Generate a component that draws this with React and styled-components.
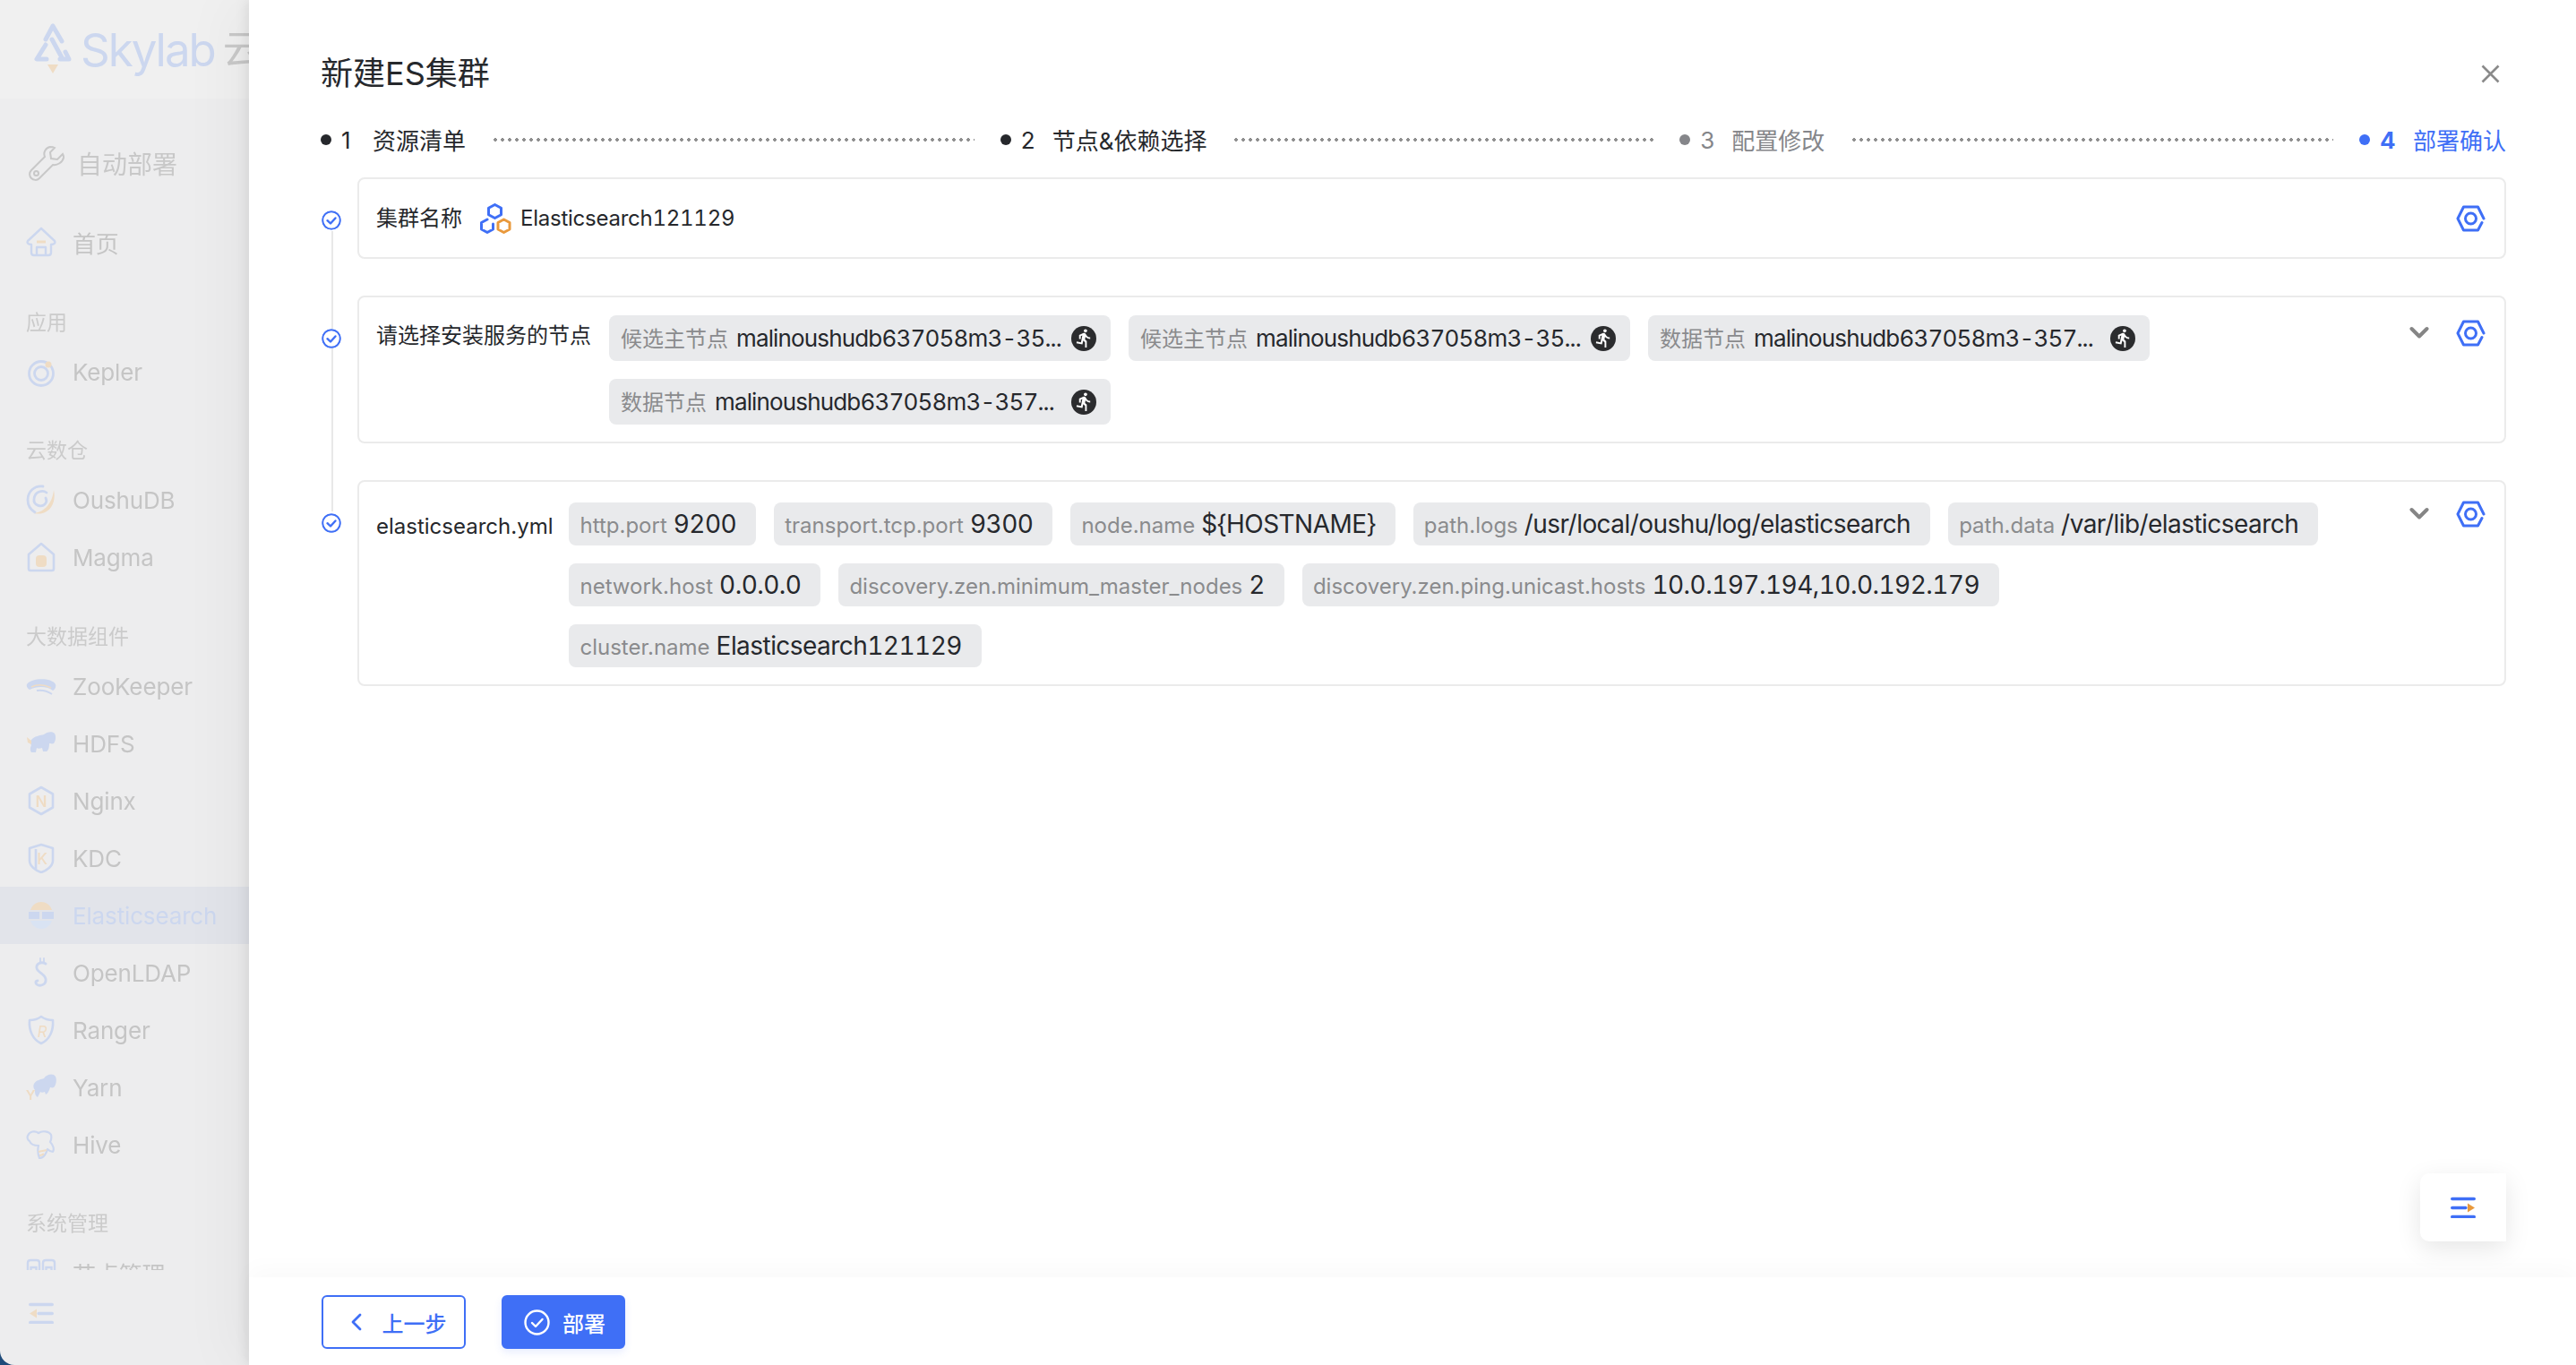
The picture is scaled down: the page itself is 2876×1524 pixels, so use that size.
import React from 'react';
import styled, { createGlobalStyle } from 'styled-components';
import { MdDirectionsRun } from 'react-icons/md';

const BLUE = '#3f6ff6';
const DIM_BLUE = '#ccd7ef';
const DIM_ORANGE = '#efdcc4';

const GlobalStyle = createGlobalStyle`
  html, body { margin: 0; padding: 0; background: #1f4b7a; }
  body { font-family: Inter, "Noto Sans CJK SC", sans-serif; }
  * { box-sizing: border-box; }
`;

const Page = styled.div`
  width: 2876px;
  height: 1524px;
  display: flex;
  overflow: hidden;
`;

const Sidebar = styled.aside`
  width: 278px;
  flex: none;
  height: 100%;
  display: flex;
  flex-direction: column;
  background: #ededee;
  border-bottom-left-radius: 16px;
  overflow: hidden;
`;

const Brand = styled.div`
  height: 110px;
  flex: none;
  display: flex;
  align-items: center;
  padding-left: 37px;
  gap: 9px;
  background: #f0f0f0;
  white-space: nowrap;
  filter: blur(0.6px);

  & > * {
    flex: none;
  }
`;

const BrandName = styled.span`
  font-size: 51px;
  letter-spacing: -2px;
  color: ${DIM_BLUE};
  line-height: 1;
`;

const BrandSuffix = styled.span`
  font-size: 44px;
  color: #c9c9c9;
  line-height: 1;
`;

const NavScroll = styled.nav`
  flex: 1;
  min-height: 0;
  overflow: hidden;
  padding-top: 40px;
  filter: blur(0.5px);
`;

const SectionHead = styled.div`
  height: 64px;
  display: flex;
  align-items: center;
  padding-left: 32px;
  gap: 14px;
  font-size: 28px;
  color: #c8c8c8;
  margin-bottom: 24px;
`;

const NavItem = styled.div`
  height: 64px;
  display: flex;
  align-items: center;
  padding-left: 29px;
  gap: 18px;
  font-size: 26px;
  letter-spacing: -0.15px;
  color: ${p => (p.$active ? DIM_BLUE : '#c5c5c5')};
  background: ${p => (p.$active ? '#e2e4ea' : 'transparent')};
`;

const NavIcon = styled.svg`
  width: 34px;
  height: 34px;
  flex: none;
`;

const GroupTitle = styled.div`
  height: 40px;
  line-height: 40px;
  padding-left: 29px;
  font-size: 23px;
  color: #cbcbcb;
  margin: ${p => (p.$top || 36)}px 0 3px;
`;

const SideFooter = styled.div`
  height: 106px;
  flex: none;
  display: flex;
  align-items: flex-start;
  padding: 36px 0 0 32px;
  filter: blur(0.4px);
`;

const Modal = styled.main`
  flex: 1;
  min-width: 0;
  position: relative;
  display: flex;
  flex-direction: column;
  background: #fff;
  box-shadow: -4px 0 12px rgba(0, 0, 0, 0.07), -20px 0 60px rgba(0, 0, 0, 0.04);
`;

const Body = styled.div`
  flex: 1;
  min-height: 0;
  padding: 57px 78px 0 80px;
`;

const Head = styled.header`
  display: flex;
  align-items: center;
  justify-content: space-between;
  height: 50px;
  padding-right: 7px;
`;

const Title = styled.h1`
  margin: 0;
  font-size: 36px;
  font-weight: 400;
  color: #26282c;
  line-height: 50px;
`;

const CloseIcon = styled.svg`
  width: 21px;
  height: 21px;
`;

const Steps = styled.ol`
  list-style: none;
  display: flex;
  align-items: center;
  margin: 29px 0 22px;
  padding: 0;
  height: 40px;
`;

const Step = styled.li`
  display: flex;
  align-items: center;
  flex: ${p => (p.$last ? 'none' : '1 1 0')};
  min-width: 0;
  font-size: 26px;
  color: ${p => p.$color};
`;

const StepDot = styled.span`
  width: 12px;
  height: 12px;
  border-radius: 50%;
  background: ${p => p.$color};
  flex: none;
`;

const StepNum = styled.span`
  width: ${p => (p.$bold ? 17 : 15)}px;
  margin: 0 20px 0 11px;
  font-weight: ${p => (p.$bold ? 700 : 400)};
`;

const StepText = styled.span`
  padding-bottom: 2px;
`;

const StepLine = styled.span`
  flex: 1;
  height: 4px;
  margin: 0 29px 0 31px;
  background-image: radial-gradient(circle at 2px 2px, #8f8f8f 1.9px, transparent 2.1px);
  background-size: 8px 4px;
`;

const Row = styled.section`
  display: flex;
  padding-bottom: ${p => (p.$last ? 0 : 41)}px;
`;

const Rail = styled.div`
  width: 41px;
  flex: none;
  position: relative;
  padding: 37px 0 0 1px;

  &::before {
    content: '';
    position: absolute;
    left: 12px;
    width: 2px;
    background: #e8e8e8;
    top: ${p => (p.$first ? 60 : 0)}px;
    bottom: ${p => (p.$last ? 'auto' : '-41px')};
    height: ${p => (p.$last ? '35px' : 'auto')};
  }
`;

const CheckIcon = styled.svg`
  position: relative;
  display: block;
  width: 22px;
  height: 22px;
  background: #fff;
  border-radius: 50%;
`;

const Card = styled.div`
  flex: 1;
  min-width: 0;
  display: flex;
  align-items: ${p => (p.$center ? 'center' : 'flex-start')};
  min-height: ${p => p.$min || 0}px;
  padding: ${p => p.$pad};
  border: 2px solid #ebebeb;
  border-radius: 8px;
`;

const Label = styled.div`
  flex: none;
  font-size: 24px;
  color: #26282c;
  line-height: ${p => p.$line}px;
  margin-right: ${p => p.$gap || 20}px;
  white-space: nowrap;
`;

const ClusterValue = styled.div`
  flex: 1;
  display: flex;
  align-items: center;
  gap: 10px;
  font-size: 24px;
  letter-spacing: -0.25px;
  font-variant-numeric: tabular-nums;
  color: #26282c;
`;

const Tags = styled.div`
  flex: 1;
  min-width: 0;
  display: flex;
  flex-wrap: wrap;
  gap: 20px;
`;

const Tag = styled.div`
  display: inline-flex;
  align-items: baseline;
  gap: 7px;
  height: ${p => p.$h}px;
  line-height: ${p => p.$h}px;
  padding: 0 22px 0 12px;
  background: #e9eaec;
  border-radius: 8px;
  white-space: nowrap;
`;

const NodeTag = styled(Tag)`
  width: 560px;
  gap: 9px;
  padding: 0 16px 0 13px;
`;

const TagKey = styled.span`
  font-size: 24px;
  color: #8a8b8d;
`;

const TagValue = styled.span`
  font-size: ${p => p.$size}px;
  letter-spacing: ${p => p.$track}px;
  font-variant-numeric: tabular-nums;
  color: #26282c;
`;

const RunBadge = styled.span`
  width: 28px;
  height: 28px;
  margin-left: auto;
  align-self: center;
  display: flex;
  align-items: center;
  justify-content: center;
  border-radius: 50%;
  background: #2b2c2e;
  color: #fff;
  font-size: 23px;
  flex: none;
`;

const Actions = styled.div`
  flex: none;
  display: flex;
  align-items: center;
  gap: 30px;
  margin-top: ${p => p.$top || 0}px;
`;

const Chevron = styled.svg`
  width: 22px;
  height: 14px;
  margin-top: -3px;
`;

const GearIcon = styled.svg`
  width: 33px;
  height: 30px;
  flex: none;
`;

const FloatTool = styled.div`
  position: absolute;
  right: 78px;
  top: 1310px;
  width: 96px;
  height: 76px;
  display: flex;
  align-items: center;
  justify-content: center;
  background: #fff;
  border-radius: 10px 0 0 10px;
  box-shadow: 0 8px 28px rgba(0, 0, 0, 0.1);
`;

const Footer = styled.footer`
  height: 98px;
  flex: none;
  display: flex;
  gap: 40px;
  padding: 20px 0 0 81px;
  background: #fff;
  box-shadow: 0 -10px 24px rgba(0, 0, 0, 0.025);
  position: relative;
`;

const Button = styled.button`
  height: 60px;
  width: ${p => p.$w}px;
  display: flex;
  align-items: center;
  justify-content: center;
  gap: ${p => p.$gap}px;
  padding: 0 0 0 ${p => p.$left}px;
  font: 500 24px Inter, "Noto Sans CJK SC", sans-serif;
  border-radius: 6px;
  border: 2px solid ${BLUE};
  color: ${p => (p.$primary ? '#fff' : BLUE)};
  background: ${p => (p.$primary ? BLUE : '#fff')};
  box-shadow: ${p => (p.$primary ? '0 4px 8px rgba(63, 111, 246, 0.12)' : 'none')};
`;

const I = {
  Wrench: () => (
    <svg width="40" height="40" viewBox="0 0 40 40" fill="none" stroke="#c8c8c8" strokeWidth="2">
      <path d="M24 2c-5 1-8 6-6 11L3 28c-3 3-2 7 0 9s6 3 9 0l15-15c5 1 11-3 12-8 .2-1.500-.5-3-1-4l-6 6-7-1-1-7 5-5c-1-.6-3-1-5-1z" />
      <circle cx="8.500" cy="31.500" r="2.500" />
    </svg>
  ),
  Home: () => (
    <NavIcon viewBox="0 0 34 34" fill="none" stroke={DIM_BLUE} strokeWidth="2.400" strokeLinejoin="round">
      <path d="M17 2 2 16c-1 2 0 4 4 4v9c0 2 1 3 3 3h16c2 0 3-1 3-3v-9c4 0 5-2 4-4z" />
      <path d="M12 32v-9h10v9" />
      <path d="M12 17h10" stroke={DIM_ORANGE} strokeWidth="3" />
    </NavIcon>
  ),
  Kepler: () => (
    <NavIcon viewBox="0 0 34 34" fill="none" stroke={DIM_BLUE} strokeWidth="2.800">
      <circle cx="17" cy="19" r="13.500" />
      <circle cx="17" cy="19" r="7.500" />
      <circle cx="25" cy="9" r="3.500" fill={DIM_ORANGE} stroke="none" />
    </NavIcon>
  ),
  Oushu: () => (
    <NavIcon viewBox="0 0 34 34" fill="none" stroke={DIM_BLUE} strokeWidth="2.800" strokeLinecap="round">
      <path d="M19 2C9 1 2 8 2 17c0 6 3 11 8 14" />
      <path d="M23 9c-4-3-13-2-14 7-1 7 8 10 12 6 2-2 2-5 1-7" />
      <path d="M31 6c2 9 0 19-8 24-5 3-9 3-14 2 9-1 20-8 22-26z" fill={DIM_ORANGE} stroke="none" />
    </NavIcon>
  ),
  Magma: () => (
    <NavIcon viewBox="0 0 34 34" fill="none" stroke={DIM_BLUE} strokeWidth="2.600" strokeLinejoin="round">
      <path d="M17 2 3 14v3h0v13c0 1.500 1 2 2 2h24c1 0 2-.5 2-2V17 14z" />
      <rect x="11" y="15" width="12" height="13" rx="4" fill={DIM_ORANGE} stroke="none" />
    </NavIcon>
  ),
  Zoo: () => (
    <NavIcon viewBox="0 0 34 34">
      <path d="M1 15C6 8 28 7 33 15c1 3-1 6-3 7-6-5-18-5-26-1-2-1-4-4-3-6z" fill={DIM_BLUE} />
      <path d="M6 18c6-3 14-3 22 1" stroke={DIM_ORANGE} strokeWidth="1.500" fill="none" />
      <path d="M12 22c6-1 11 0 17 4" stroke={DIM_BLUE} strokeWidth="2" fill="none" />
    </NavIcon>
  ),
  Elephant: () => (
    <NavIcon viewBox="0 0 34 34">
      <path d="M6 13c3-4 10-5 14-6 3-3 10-4 12-1 2 3 1 9-1 11-2 1-4 0-5 0 0 4-1 8-3 9h-4l-1-4c-3 1-5 1-6 0l-1 5H6c-2-3-1-6 0-8-2-2-2-4 0-6z" fill={DIM_BLUE} />
      <path d="M6 14 1 10l1 6 4 2" fill={DIM_ORANGE} />
    </NavIcon>
  ),
  Nginx: () => (
    <NavIcon viewBox="0 0 34 34" fill="none" stroke={DIM_BLUE} strokeWidth="2.600" strokeLinejoin="round">
      <path d="M17 2 30 9.500v15L17 32 4 24.500v-15z" />
      <text x="17" y="23.500" textAnchor="middle" fontSize="17" fontWeight="600" fill={DIM_ORANGE} stroke="none">N</text>
    </NavIcon>
  ),
  Kdc: () => (
    <NavIcon viewBox="0 0 34 34" fill="none" stroke={DIM_BLUE} strokeWidth="2.600" strokeLinejoin="round">
      <path d="M17 2 30 6v14c0 6-7 11-13 13C11 31 4 26 4 20V6z" />
      <path d="M11 7v22" />
      <text x="18" y="24" textAnchor="middle" fontSize="17" fontWeight="500" fill={DIM_ORANGE} stroke="none">K</text>
    </NavIcon>
  ),
  Elastic: () => (
    <NavIcon viewBox="0 0 34 34">
      <path d="M5 11C7 5 12 2 17 2s10 3 12 9z" fill={DIM_ORANGE} />
      <path d="M3 13h12v8H3z" fill={DIM_BLUE} />
      <path d="M18 13h13v8H18z" fill={DIM_BLUE} />
      <path d="M5 23h24c-2 6-7 9-12 9s-10-3-12-9z" fill="#d9e3f3" />
    </NavIcon>
  ),
  Ldap: () => (
    <NavIcon viewBox="0 0 34 34" fill="none" stroke={DIM_BLUE} strokeWidth="2.800" strokeLinecap="round">
      <path d="M22 7c-5-3-11 0-10 5s9 6 10 12-6 9-10 6c-2-2-1-4 1-4" />
      <path d="M16 1v5M20 1v5" strokeWidth="1.800" />
    </NavIcon>
  ),
  Ranger: () => (
    <NavIcon viewBox="0 0 34 34" fill="none" stroke={DIM_BLUE} strokeWidth="2.600" strokeLinejoin="round">
      <path d="M17 2c4 3 9 4 13 4 1 12-4 22-13 26C8 28 3 18 4 6c4 0 9-1 13-4z" />
      <text x="18" y="25" textAnchor="middle" fontSize="17" fontStyle="italic" fill={DIM_ORANGE} stroke="none">R</text>
    </NavIcon>
  ),
  Yarn: () => (
    <NavIcon viewBox="0 0 34 34">
      <path d="M9 13c2-4 8-5 11-6 3-5 11-6 13-2 2 4 0 11-2 12-2 1-3 0-4 0-1 4-3 7-5 8l-1-3c-2 1-4 1-5 0l-3 6c-3-2-3-5-3-8-2-2-2-5-1-7z" fill={DIM_BLUE} />
      <text x="5" y="31" textAnchor="middle" fontSize="15" fontWeight="600" fill={DIM_ORANGE}>Y</text>
    </NavIcon>
  ),
  Hive: () => (
    <NavIcon viewBox="0 0 34 34" fill="none" stroke={DIM_BLUE} strokeWidth="2.200" strokeLinejoin="round">
      <path d="M2 7c2-5 8-6 12-3 4-3 12-2 14 2 1 4 0 6-1 8 3 3 5 8 3 11-3 0-4-1-6-3-1 4-4 10-9 10-2-5-2-10-1-14-5 0-9-2-10-5-2-1-3-4-2-6z" />
      <path d="M14 25c3-1 6-1 9-2M15 29c2 0 4-1 5-2" stroke={DIM_ORANGE} />
    </NavIcon>
  ),
  Nodes: () => (
    <NavIcon viewBox="0 0 34 34" fill="none" stroke={DIM_BLUE} strokeWidth="2.400">
      <path d="M2 31V6c0-2 1-3 3-3h7c2 0 3 1 3 3v25zM19 31V6c0-2 1-3 3-3h7c2 0 3 1 3 3v25z" />
      <path d="M5.500 11h6v5h-6zM22.500 11h6v5h-6z" />
    </NavIcon>
  ),
};

const CheckMark = () => (
  <CheckIcon viewBox="0 0 22 22" fill="none" stroke={BLUE}>
    <circle cx="11" cy="11" r="9.800" strokeWidth="2" />
    <path d="M6.500 11.200 10 14.500l5.500-6" strokeWidth="2.400" strokeLinecap="round" strokeLinejoin="round" />
  </CheckIcon>
);

const Gear = () => (
  <GearIcon viewBox="0 0 33 30" fill="none" stroke={BLUE} strokeWidth="3" strokeLinecap="round" strokeLinejoin="round">
    <path d="M31 15 24.500 2h-16L2 15l6.500 13h16l4.500-8.500" />
    <circle cx="16.500" cy="15" r="6" />
  </GearIcon>
);

const Down = () => (
  <Chevron viewBox="0 0 22 14" fill="none" stroke="#858585" strokeWidth="4" strokeLinecap="round" strokeLinejoin="round">
    <path d="M2.500 3l8.500 8.500L19.500 3" />
  </Chevron>
);

const HexCluster = () => (
  <svg width="35" height="34" viewBox="0 0 35 34" fill="none" strokeWidth="3" strokeLinejoin="round">
    <path d="M16.500 1.500l7 3.800v7.400l-7 3.800-7-3.800V5.300z" stroke={BLUE} />
    <path d="M14.500 23v6l-6.500 3.500L1.500 29v-7.500L8 18" stroke={BLUE} strokeLinecap="round" />
    <path d="M26.500 18l6.500 3.500V29l-6.500 3.500L20 29v-7.500z" stroke="#e9993c" />
  </svg>
);

const ListGlyph = ({ line, arrow, flip }) => (
  <svg width="28" height="24" viewBox="0 0 28 24" fill="none" stroke={line} strokeWidth="3.600" strokeLinecap="round">
    <g transform={flip ? 'translate(28,0) scale(-1,1)' : undefined}>
      <path d="M1.800 2.500h24.400M1.800 12.500h15M1.800 22.500h24.400" />
      <path d="M19 7.500v10l8-5z" fill={arrow} stroke="none" />
    </g>
  </svg>
);

const STEPS = [
  { num: '1', text: '资源清单', color: '#26282c' },
  { num: '2', text: '节点&依赖选择', color: '#26282c' },
  { num: '3', text: '配置修改', color: '#85868a' },
  { num: '4', text: '部署确认', color: BLUE, bold: true, last: true },
];

const NODES = [
  { role: '候选主节点', host: 'malinoushudb637058m3-35...' },
  { role: '候选主节点', host: 'malinoushudb637058m3-35...' },
  { role: '数据节点', host: 'malinoushudb637058m3-357...' },
  { role: '数据节点', host: 'malinoushudb637058m3-357...' },
];

const YML = [
  ['http.port', '9200'],
  ['transport.tcp.port', '9300'],
  ['node.name', '${HOSTNAME}'],
  ['path.logs', '/usr/local/oushu/log/elasticsearch'],
  ['path.data', '/var/lib/elasticsearch'],
  ['network.host', '0.0.0.0'],
  ['discovery.zen.minimum_master_nodes', '2'],
  ['discovery.zen.ping.unicast.hosts', '10.0.197.194,10.0.192.179'],
  ['cluster.name', 'Elasticsearch121129'],
];

const COMPONENTS = [
  ['ZooKeeper', I.Zoo],
  ['HDFS', I.Elephant],
  ['Nginx', I.Nginx],
  ['KDC', I.Kdc],
  ['Elasticsearch', I.Elastic, true],
  ['OpenLDAP', I.Ldap],
  ['Ranger', I.Ranger],
  ['Yarn', I.Yarn],
  ['Hive', I.Hive],
];

function Side() {
  return (
    <Sidebar>
      <Brand>
        <svg width="44" height="58" viewBox="0 0 44 58" fill="none">
          <path d="M22 3 32 20 M22 3 14 18 M21 18 33 40 M14 24 4 40h11 M30 40h10l-4-8" stroke={DIM_BLUE} strokeWidth="5" strokeLinecap="round" strokeLinejoin="round" />
          <path d="M16 46h12l-6 10z" fill={DIM_ORANGE} />
        </svg>
        <BrandName>Skylab</BrandName>
        <BrandSuffix>云</BrandSuffix>
      </Brand>
      <NavScroll>
        <SectionHead><I.Wrench />自动部署</SectionHead>
        <NavItem><I.Home />首页</NavItem>
        <GroupTitle $top={38}>应用</GroupTitle>
        <NavItem><I.Kepler />Kepler</NavItem>
        <GroupTitle>云数仓</GroupTitle>
        <NavItem><I.Oushu />OushuDB</NavItem>
        <NavItem><I.Magma />Magma</NavItem>
        <GroupTitle $top={37}>大数据组件</GroupTitle>
        {COMPONENTS.map(([name, Icon, active]) => (
          <NavItem key={name} $active={active}><Icon />{name}</NavItem>
        ))}
        <GroupTitle>系统管理</GroupTitle>
        <NavItem><I.Nodes />节点管理</NavItem>
      </NavScroll>
      <SideFooter>
        <ListGlyph line={DIM_BLUE} arrow={DIM_ORANGE} flip />
      </SideFooter>
    </Sidebar>
  );
}

export default function App() {
  return (
    <Page>
      <GlobalStyle />
      <Side />
      <Modal>
        <Body>
          <Head>
            <Title>新建ES集群</Title>
            <CloseIcon viewBox="0 0 21 21" fill="none" stroke="#8a8a8a" strokeWidth="2.600">
              <path d="M1.500 1.500l18 18M19.500 1.500l-18 18" />
            </CloseIcon>
          </Head>
          <Steps>
            {STEPS.map(s => (
              <Step key={s.num} $color={s.color} $last={s.last}>
                <StepDot $color={s.color} />
                <StepNum $bold={s.bold}>{s.num}</StepNum>
                <StepText>{s.text}</StepText>
                {!s.last && <StepLine />}
              </Step>
            ))}
          </Steps>

          <Row>
            <Rail $first><CheckMark /></Rail>
            <Card $center $min={91} $pad="0 21px 0 19px">
              <Label $line={40}>集群名称</Label>
              <ClusterValue><HexCluster />Elasticsearch121129</ClusterValue>
              <Actions><Gear /></Actions>
            </Card>
          </Row>

          <Row>
            <Rail><CheckMark /></Rail>
            <Card $pad="20px 21px 19px 19px">
              <Label $line={46}>请选择安装服务的节点</Label>
              <Tags>
                {NODES.map((n, i) => (
                  <NodeTag key={i} $h={51}>
                    <TagKey>{n.role}</TagKey>
                    <TagValue $size={26} $track={-0.85}>{n.host}</TagValue>
                    <RunBadge><MdDirectionsRun /></RunBadge>
                  </NodeTag>
                ))}
              </Tags>
              <Actions $top={5}><Down /><Gear /></Actions>
            </Card>
          </Row>

          <Row $last>
            <Rail $last><CheckMark /></Rail>
            <Card $pad="23px 21px 19px 19px">
              <Label $line={54} $gap={18}>elasticsearch.yml</Label>
              <Tags>
                {YML.map(([k, v]) => (
                  <Tag key={k} $h={48}>
                    <TagKey>{k}</TagKey>
                    <TagValue $size={28} $track={-0.55}>{v}</TagValue>
                  </Tag>
                ))}
              </Tags>
              <Actions $top={-2}><Down /><Gear /></Actions>
            </Card>
          </Row>
        </Body>
        <FloatTool><ListGlyph line={BLUE} arrow="#e9993c" /></FloatTool>
        <Footer>
          <Button $w={161} $gap={22} $left={10}>
            <svg width="14" height="20" viewBox="0 0 14 20" fill="none" stroke={BLUE} strokeWidth="2.800" strokeLinecap="round" strokeLinejoin="round">
              <path d="M11 2 3 10l8 8" />
            </svg>
            上一步
          </Button>
          <Button $primary $w={138} $gap={14} $left={3}>
            <svg width="29" height="29" viewBox="0 0 29 29" fill="none" stroke="#fff" strokeWidth="2.400" strokeLinecap="round" strokeLinejoin="round">
              <circle cx="14.500" cy="14.500" r="13" />
              <path d="M9 15l4 4 7.500-8" />
            </svg>
            部署
          </Button>
        </Footer>
      </Modal>
    </Page>
  );
}
